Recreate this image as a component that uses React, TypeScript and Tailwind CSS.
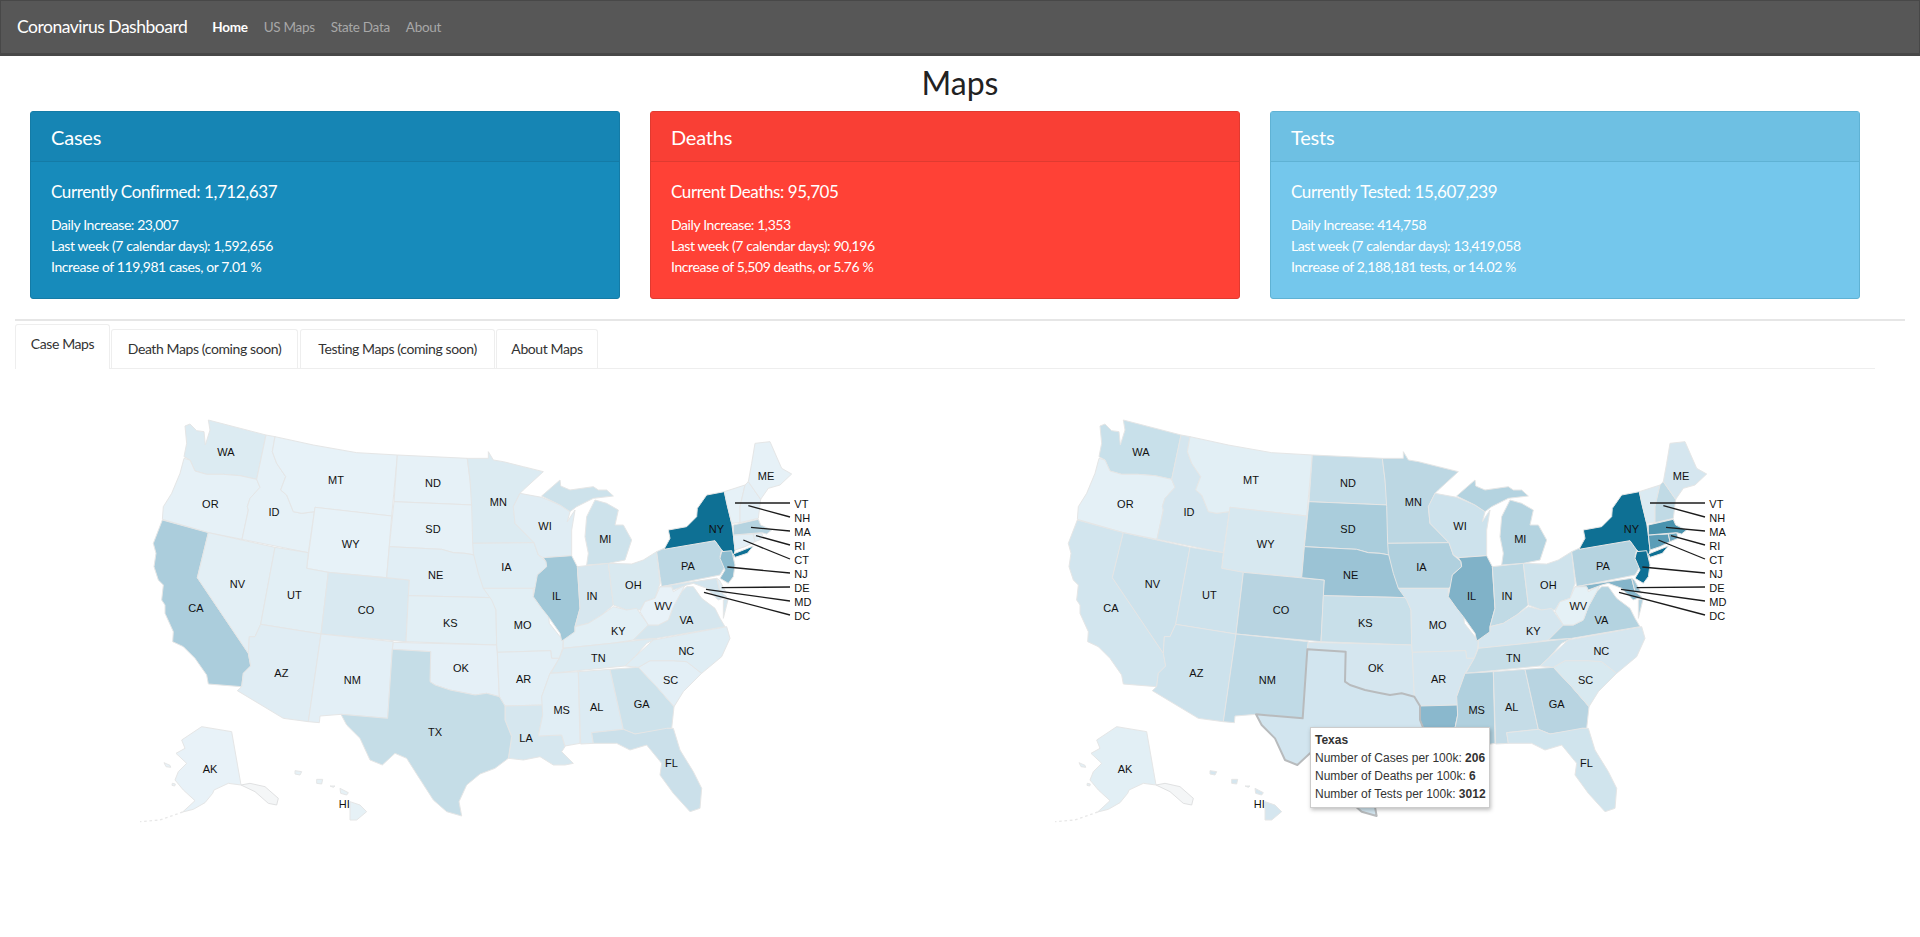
const font = "font-['Lato','Liberation_Sans',sans-serif]";

// map outlines, traced in a 3x grid: 1 svg unit = 1/3 px
const shapes: Record<string, string[]> = {
  WA: ["205,30 378,75 350,208 300,197 250,193 200,193 165,183 150,150 132,140 140,100 135,48 150,42 170,62 192,65 196,105 210,60"],
  OR: ["132,145 150,150 165,183 200,193 250,193 300,197 350,208 360,232 330,265 322,290 325,300 306,388 205,368 67,328 70,290 95,250 120,190"],
  CA: ["67,330 205,368 172,503 325,730 332,768 310,790 305,830 205,822 200,795 165,745 130,710 98,695 100,665 75,610 75,585 65,570 70,525 55,510 42,470 48,430 40,400"],
  NV: ["205,368 405,412 362,643 345,680 328,680 325,730 172,503"],
  ID: ["378,75 405,80 397,125 410,160 437,200 422,240 440,255 460,305 485,310 523,305 505,428 306,388 325,300 322,290 330,265 360,232 350,208"],
  MT: ["405,80 520,105 650,128 772,135 755,318 525,292 523,305 485,310 460,305 440,255 422,240 437,200 410,160 397,125"],
  WY: ["525,292 755,318 740,503 565,487 500,475"],
  UT: ["405,412 505,428 500,475 565,487 543,672 362,643"],
  CO: ["565,487 808,510 798,695 543,672"],
  AZ: ["362,643 543,672 505,935 430,925 292,842 305,830 310,790 332,768 325,730 328,680 345,680"],
  NM: ["543,672 760,695 757,718 743,925 603,913 540,918 538,938 505,935"],
  ND: ["772,135 982,145 990,210 1000,285 762,275"],
  SD: ["762,275 1000,285 1003,400 1003,435 975,430 940,428 905,418 748,410"],
  NE: ["748,410 905,418 940,428 975,430 1003,435 1020,490 1040,530 1055,563 805,557 808,510 740,503"],
  KS: ["805,557 1055,563 1068,600 1070,705 798,695"],
  OK: ["760,697 1070,705 1072,727 1078,860 1040,850 1005,855 970,848 930,840 885,825 870,815 872,725 757,718"],
  MN: ["982,145 1045,145 1045,125 1060,150 1090,155 1150,170 1210,185 1150,240 1140,250 1120,290 1125,340 1182,398 998,400 995,290 990,210"],
  IA: ["998,400 1182,398 1195,435 1218,455 1220,470 1192,495 1195,525 1180,535 1030,535 1015,490 1000,430"],
  MO: ["1030,535 1180,535 1180,560 1205,595 1225,610 1228,640 1260,680 1270,690 1268,715 1258,745 1235,745 1232,722 1072,727 1070,705 1068,600 1055,570"],
  AR: ["1072,727 1232,722 1235,745 1258,745 1230,790 1205,860 1208,885 1095,888 1078,860"],
  LA: ["1095,888 1208,885 1208,915 1195,978 1265,975 1275,1010 1265,1025 1300,1060 1275,1065 1240,1065 1200,1040 1150,1050 1105,1045 1115,980 1095,930"],
  WI: ["1140,250 1205,262 1260,285 1290,305 1282,335 1305,300 1295,360 1295,437 1210,443 1195,435 1182,398 1125,340 1120,290"],
  IL: ["1210,443 1295,437 1312,470 1320,595 1305,650 1305,680 1265,692 1260,670 1225,620 1205,595 1180,560 1192,495 1220,470 1218,455"],
  IN: ["1312,470 1405,460 1420,585 1385,615 1345,640 1305,650 1320,595"],
  OH: ["1405,460 1475,462 1510,450 1550,425 1560,520 1545,565 1515,575 1500,600 1460,600 1420,585"],
  MI: [
    "1205,258 1260,210 1262,228 1290,240 1360,230 1375,240 1400,240 1420,258 1360,265 1310,290 1290,305 1260,285",
    "1340,465 1345,430 1335,380 1340,320 1365,270 1400,280 1435,300 1425,345 1450,345 1475,390 1455,450 1405,460",
  ],
  KY: ["1270,690 1305,665 1305,650 1345,640 1385,615 1420,590 1460,600 1490,595 1500,610 1525,645 1480,690 1415,700 1270,715"],
  TN: ["1270,715 1415,700 1550,685 1520,700 1480,745 1455,768 1232,790 1258,745"],
  MS: ["1230,790 1315,785 1320,1000 1275,1008 1265,975 1195,978 1208,915 1205,860"],
  AL: ["1315,785 1410,778 1450,958 1355,968 1360,1000 1322,1002"],
  GA: ["1410,778 1495,772 1550,830 1602,890 1595,955 1580,955 1570,960 1485,972 1450,958"],
  FL: ["1355,968 1450,958 1485,972 1580,955 1600,955 1620,1020 1660,1085 1685,1135 1680,1195 1650,1205 1600,1150 1560,1095 1565,1060 1520,1005 1470,1020 1430,1000 1360,1000"],
  SC: ["1495,772 1530,752 1600,752 1640,755 1685,790 1630,845 1602,890 1550,830"],
  NC: ["1455,768 1480,745 1540,690 1760,650 1770,685 1745,740 1685,790 1640,755 1600,752 1530,752 1495,772"],
  VA: [
    "1480,690 1525,645 1555,645 1585,630 1600,590 1625,545 1640,530 1660,530 1685,565 1725,595 1740,625 1755,650 1550,685",
    "1750,570 1765,565 1750,625",
  ],
  WV: ["1500,605 1515,575 1545,565 1560,530 1595,530 1600,545 1635,525 1625,545 1600,590 1585,630 1555,645 1525,645"],
  PA: ["1550,425 1572,415 1725,392 1745,420 1740,440 1755,470 1740,495 1565,530 1560,500"],
  NY: [
    "1572,418 1590,385 1585,360 1640,350 1670,320 1672,295 1700,255 1753,245 1775,340 1780,375 1785,420 1780,445 1770,440 1745,420 1725,392",
    "1780,432 1840,408 1822,430 1785,442",
  ],
  NJ: ["1745,425 1775,422 1785,465 1780,500 1765,520 1740,505 1755,480 1740,445"],
  MD: ["1560,530 1730,505 1740,545 1760,560 1735,570 1710,545 1700,535 1660,520 1640,525 1600,540 1595,530"],
  DE: ["1730,505 1738,510 1760,550 1740,545"],
  CT: ["1780,375 1840,372 1845,395 1815,410 1785,420"],
  RI: ["1840,372 1865,368 1870,385 1845,395"],
  MA: ["1780,345 1855,328 1862,345 1895,360 1880,372 1865,368 1780,375"],
  VT: ["1753,245 1815,225 1800,290 1800,338 1775,340 1760,280"],
  NH: ["1815,225 1825,215 1862,268 1855,325 1800,338 1800,290"],
  ME: ["1845,100 1890,95 1925,175 1955,192 1920,225 1885,235 1862,268 1825,215 1835,160"],
  AK: [
    "125,990 185,950 275,965 303,1125 265,1120 222,1140 218,1150 195,1178 160,1198 128,1206 165,1172 130,1140 105,1110 115,1085 140,1060 108,1030 135,1015",
    "72,1058 90,1066 92,1072 78,1070",
    "97,1120 106,1122 104,1128 96,1126",
  ],
  HI: [
    "630,1175 660,1185 680,1205 650,1230 630,1230",
    "465,1082 485,1085 480,1095 465,1092",
    "530,1108 548,1108 545,1122 530,1120",
    "570,1128 585,1128 580,1132",
    "600,1135 625,1148 620,1155 602,1150",
  ],
  TX: ["757,718 872,725 870,815 885,825 930,840 970,848 1005,855 1040,850 1078,860 1095,888 1095,930 1115,980 1105,1045 1065,1075 1020,1092 980,1125 957,1175 965,1218 920,1205 880,1170 835,1100 800,1045 765,1030 727,1065 690,1050 660,985 620,945 603,913 743,925"],
};

const labels: [string, number, number][] = [
  ["WA", 258, 125], ["OR", 211, 281], ["ID", 402, 305], ["MT", 588, 209], ["WY", 632, 403],
  ["ND", 879, 218], ["SD", 879, 356], ["NE", 887, 494], ["NV", 292, 521], ["UT", 463, 554],
  ["CO", 678, 599], ["KS", 931, 638], ["CA", 168, 593], ["AZ", 424, 788], ["NM", 637, 809],
  ["OK", 963, 773], ["TX", 885, 965], ["AK", 210, 1076], ["HI", 613, 1181], ["MN", 1075, 275],
  ["WI", 1215, 347], ["IA", 1099, 470], ["MI", 1396, 386], ["IL", 1250, 557], ["IN", 1356, 557],
  ["OH", 1480, 524], ["MO", 1148, 644], ["KY", 1435, 662], ["TN", 1375, 743], ["AR", 1151, 806],
  ["MS", 1265, 899], ["AL", 1370, 890], ["GA", 1505, 881], ["LA", 1158, 984], ["FL", 1594, 1058],
  ["SC", 1592, 809], ["NC", 1639, 722], ["VA", 1639, 629], ["WV", 1570, 587], ["PA", 1644, 467],
  ["NY", 1729, 356], ["ME", 1878, 197],
];

const callouts: [string, number, number, number][] = [
  ["VT", 1785, 279, 283], ["NH", 1825, 287, 325], ["MA", 1833, 352, 367], ["RI", 1848, 377, 409],
  ["CT", 1810, 390, 451], ["NJ", 1762, 471, 493], ["DE", 1745, 533, 535], ["MD", 1698, 538, 577],
  ["DC", 1692, 547, 619],
];

const leftFill: Record<string, string> = {
  WA: "#dcebf2", OR: "#e6f1f7", CA: "#abcddc", NV: "#e3eff5", ID: "#e6f1f7", MT: "#e7f2f8", WY: "#e7f2f8",
  UT: "#e2eff5", CO: "#d9e9f1", AZ: "#e0edf4", NM: "#e3eff6", ND: "#e6f1f7", SD: "#e6f1f7", NE: "#e1eef5",
  KS: "#e2eff5", OK: "#e5f0f7", TX: "#c5dde7", MN: "#dcebf2", IA: "#dfedf4", MO: "#e2eff5", AR: "#e3eff6",
  LA: "#d6e7ef", WI: "#e0edf4", IL: "#a1c8d8", IN: "#d7e7ef", OH: "#d9e9f0", MI: "#cde2eb", KY: "#e2eff5",
  TN: "#dcebf2", MS: "#e1eef5", AL: "#dcebf3", GA: "#cde2eb", FL: "#cbe0ea", SC: "#e3eff6", NC: "#dfedf4",
  VA: "#d5e6ee", WV: "#e8f2f8", PA: "#bdd8e4", NY: "#0e7094", NJ: "#8dbccf", MD: "#d3e5ee", DE: "#e0edf4",
  CT: "#e3eff6", RI: "#e3eff6", MA: "#b5d3e0", VT: "#e6f1f7", NH: "#e3eff6", ME: "#e6f1f7", AK: "#e8f2f8", HI: "#e6f1f6",
};

const rightFill: Record<string, string> = {
  WA: "#c8e0ea", OR: "#e4f0f6", CA: "#d2e5ee", NV: "#cde2ec", ID: "#d5e6ef", MT: "#e2eff5", WY: "#d7e8f0",
  UT: "#cde2ec", CO: "#b8d4e1", AZ: "#cde2ec", NM: "#c0dae6", ND: "#c5dde8", SD: "#aacddc", NE: "#9bc3d5",
  KS: "#c8dfe9", OK: "#d5e6ef", TX: "#d2e5ef", MN: "#bcd7e3", IA: "#b0d0de", MO: "#d5e6ef", AR: "#d5e6ef",
  LA: "#8ab8cd", WI: "#cde2ec", IL: "#80b2c8", IN: "#c0dae5", OH: "#cfe3ec", MI: "#b4d3e0", KY: "#d5e6ef",
  TN: "#c6dde7", MS: "#b0d0de", AL: "#c5dce7", GA: "#b8d4e1", FL: "#d0e4ed", SC: "#d8e9f0", NC: "#d5e6ef",
  VA: "#b4d3e0", WV: "#e5f1f6", PA: "#b5d3e0", NY: "#0e7094", NJ: "#0f7095", MD: "#85b5ca", DE: "#a0c6d6",
  CT: "#5c9db7", RI: "#6da7bf", MA: "#4a93ae", VT: "#dbeaf2", NH: "#c0dae5", ME: "#d5e6ef", AK: "#e2eff5", HI: "#d5e6ef",
};

function UsMap({ fills, hovered }: { fills: Record<string, string>; hovered?: string }) {
  const names = Object.keys(shapes);
  return (
    <svg viewBox="0 0 2100 1260" className="w-[700px] h-[420px] block">
      {names.filter((n) => n !== hovered).map((n) =>
        shapes[n].map((pts, i) => (
          <polygon key={n + i} points={pts} fill={fills[n]} stroke="#e5e6e6" strokeWidth={3} strokeLinejoin="round" />
        ))
      )}
      <polygon points="303,1125 330,1120 375,1130 415,1165 410,1185 385,1180 345,1145" fill="#f4f6f7" stroke="#e0e1e2" strokeWidth={3} />
      <polyline points="128,1206 60,1230 0,1235" fill="none" stroke="#e8e8e8" strokeWidth={4} strokeDasharray="8 8" />
      {hovered && (
        <polygon points={shapes[hovered][0]} fill={fills[hovered]} stroke="#b8bbbd" strokeWidth={6} strokeLinejoin="round" />
      )}
      {callouts.map(([n, x, y1, y2]) => (
        <line key={n} x1={x} y1={y1} x2={1950} y2={y2 - 4} stroke="#1c1c1c" strokeWidth={4} />
      ))}
      {labels.filter(([n]) => n !== hovered).map(([n, x, y]) => (
        <text key={n} x={x} y={y + 12} textAnchor="middle" fontSize={33} fontFamily="Liberation Sans, sans-serif" fill="#111">{n}</text>
      ))}
      {callouts.map(([n, , , y]) => (
        <text key={n} x={1963} y={y + 12} fontSize={33} fontFamily="Liberation Sans, sans-serif" fill="#111">{n}</text>
      ))}
    </svg>
  );
}

function StatCard({ title, lead, lines, wrap, head }: { title: string; lead: string; lines: string[]; wrap: string; head: string }) {
  return (
    <div className={`h-[188px] rounded-[3px] border text-white ${wrap}`}>
      <div className={`h-[50px] pl-[20px] flex items-center border-b text-[20px] tracking-[-0.2px] ${head}`}>{title}</div>
      <div className="pl-[20px] pt-[17px]">
        <div className="text-[17px] tracking-[-0.4px] leading-[26px] mb-[9px]">{lead}</div>
        {lines.map((l) => (
          <div key={l} className="text-[14px] tracking-[-0.4px] leading-[21px]">{l}</div>
        ))}
      </div>
    </div>
  );
}

export default function App() {
  return (
    <div className={`min-h-[937px] bg-white text-[#222] ${font}`}>
      <nav className="h-[56px] bg-[#575757] border border-[#484848] border-b-[3px] flex items-center">
        <a className="ml-[16px] text-[17.5px] tracking-[-0.48px] text-white">Coronavirus Dashboard</a>
        <div className="ml-[25px] flex gap-[16px] text-[13.5px] tracking-[-0.3px] text-[#a8a8a8]">
          <a className="text-white font-bold">Home</a>
          <a>US Maps</a>
          <a>State Data</a>
          <a>About</a>
        </div>
      </nav>

      <h1 className="h-[55px] text-center text-[32px] leading-[53px]">Maps</h1>

      <div className="ml-[30px] w-[1830px] grid grid-cols-3 gap-[30px]">
        <StatCard
          title="Cases"
          lead="Currently Confirmed: 1,712,637"
          lines={["Daily Increase: 23,007", "Last week (7 calendar days): 1,592,656", "Increase of 119,981 cases, or 7.01 %"]}
          wrap="bg-[#178bbb] border-[#147ba6]"
          head="bg-[#1685b4] border-[#147ba6]"
        />
        <StatCard
          title="Deaths"
          lead="Current Deaths: 95,705"
          lines={["Daily Increase: 1,353", "Last week (7 calendar days): 90,196", "Increase of 5,509 deaths, or 5.76 %"]}
          wrap="bg-[#ff4136] border-[#e03a30]"
          head="bg-[#f93f35] border-[#e03a30]"
        />
        <StatCard
          title="Tests"
          lead="Currently Tested: 15,607,239"
          lines={["Daily Increase: 414,758", "Last week (7 calendar days): 13,419,058", "Increase of 2,188,181 tests, or 14.02 %"]}
          wrap="bg-[#74c7ec] border-[#5fb2d4]"
          head="bg-[#6ec0e3] border-[#5fb2d4]"
        />
      </div>

      <div className="mt-[20px] ml-[15px] w-[1890px] h-[2px] bg-[#e6e6e6]" />

      <div className="mt-[3px] ml-[15px] w-[1860px] h-[45px] flex items-end border-b border-[#eeeeee] text-[14px] tracking-[-0.4px] text-[#333]">
        <div className="h-[45px] w-[95px] -mb-px bg-white border border-b-0 border-[#eeeeee] rounded-t-[3px] pt-[8px] text-center">Case Maps</div>
        <div className="ml-[1px] h-[39px] w-[187px] border border-b-0 border-[#eeeeee] rounded-t-[3px] pt-[8px] text-center">Death Maps (coming soon)</div>
        <div className="ml-[2px] h-[39px] w-[195px] border border-b-0 border-[#eeeeee] rounded-t-[3px] pt-[8px] text-center">Testing Maps (coming soon)</div>
        <div className="ml-[1px] h-[39px] w-[102px] border border-b-0 border-[#eeeeee] rounded-t-[3px] pt-[8px] text-center">About Maps</div>
      </div>

      <div className="pl-[140px] pt-[41px] flex gap-[215px]">
        <UsMap fills={leftFill} />
        <div className="relative">
          <UsMap fills={rightFill} hovered="TX" />
          <div className="absolute left-[255px] top-[317px] w-[180px] h-[81px] bg-white border border-[#cccccc] shadow-[1px_2px_4px_rgba(0,0,0,0.25)] pl-[4px] pt-[3px] font-['Liberation_Sans',sans-serif] text-[12px] leading-[18px] text-[#333]">
            <div className="font-bold">Texas</div>
            <div>Number of Cases per 100k: <b>206</b></div>
            <div>Number of Deaths per 100k: <b>6</b></div>
            <div>Number of Tests per 100k: <b>3012</b></div>
          </div>
        </div>
      </div>
    </div>
  );
}
